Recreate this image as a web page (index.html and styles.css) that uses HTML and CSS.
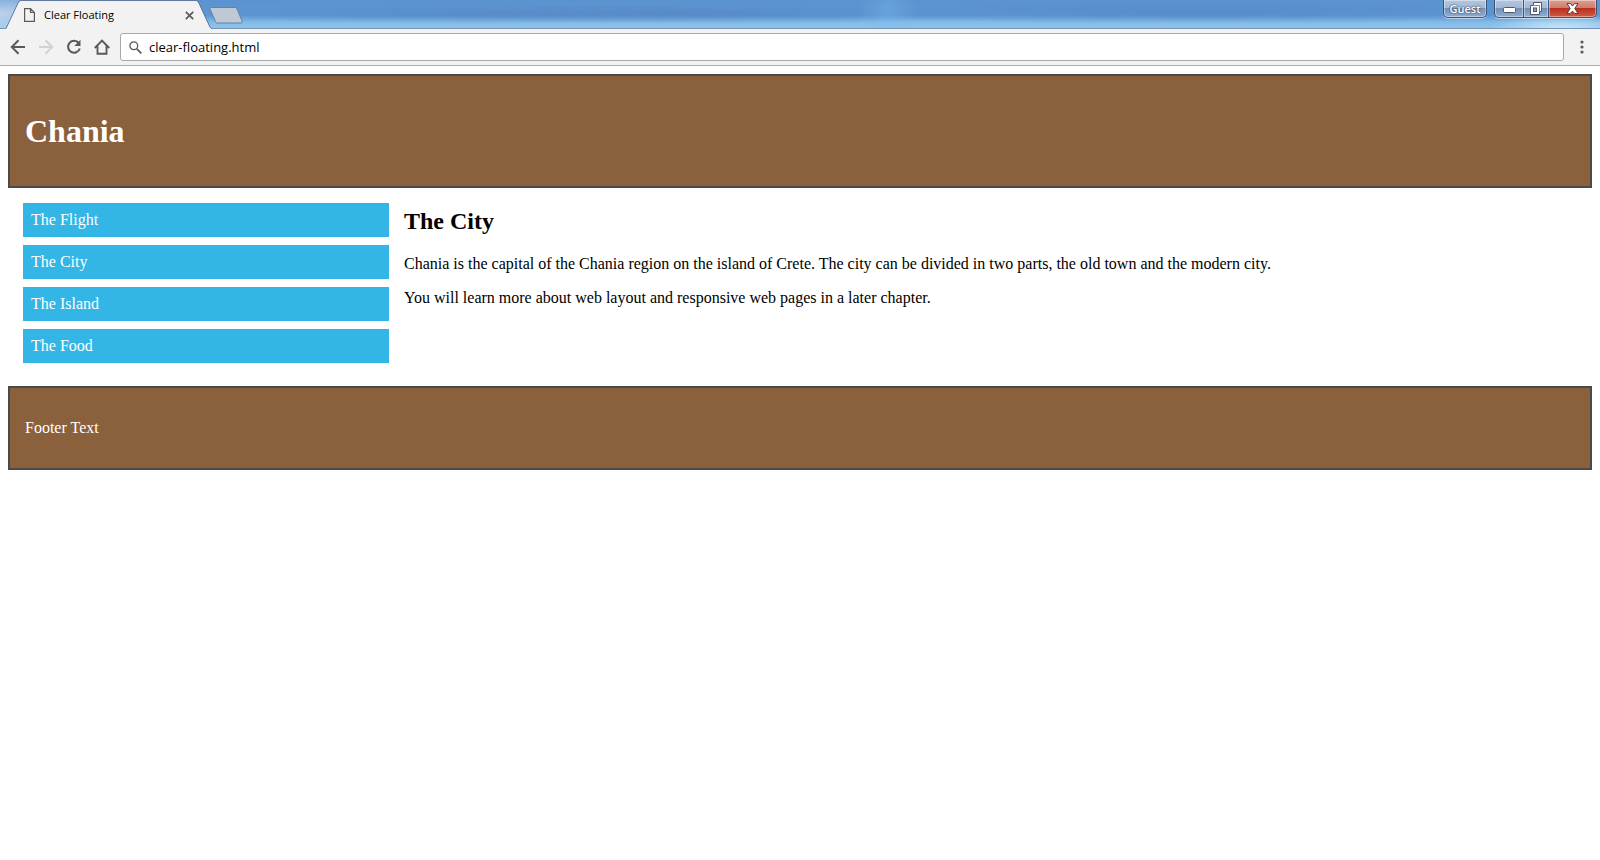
FILE: index.html
```html
<!DOCTYPE html>
<html lang="en">
<head>
<meta charset="utf-8">
<title>Clear Floating</title>
<link rel="stylesheet" href="styles.css">
</head>
<body>
<div class="browser">
  <div class="titlebar">
    <div class="tab">
      <svg class="tab-shape" width="206" height="29" viewBox="0 0 206 29" aria-hidden="true">
        <path d="M0 28.5 L12 3 Q13 .5 15 .5 H190 Q191.500 .5 192.500 3 L203.500 27 L205 28.500 V29 H0Z" fill="#f2f2f2"/>
        <path d="M0 28.500 L12 3 Q13 .5 15 .5 H190 Q192 .5 193 3 L204 27 L205.500 28.500" fill="none" stroke="#60799d"/>
      </svg>
      <div class="tab-content">
        <svg width="11" height="14" viewBox="0 0 11 14" fill="none" stroke="#5a5a5a" aria-hidden="true"><path d="M.6 .6H6.500L10.400 4.500V13.400H.6ZM6.500 .6V4.500H10.400" stroke-width="1.2"/></svg>
        <span class="tab-title">Clear Floating</span>
        <button class="plain tab-close" aria-label="Close tab"><svg width="9" height="9" viewBox="0 0 9 9" stroke="#5a5a5a" stroke-width="1.7"><path d="M.8 .8L8.200 8.200M8.200 .8L.8 8.200"/></svg></button>
      </div>
    </div>
    <button class="plain new-tab" aria-label="New tab"><svg width="34" height="17" viewBox="0 0 34 17"><path d="M2 .5H26Q27.500 .5 28 2L33 14Q33.500 16 32 16H8.500Q7 16 6.500 14.500L1 2Q.5 .5 2 .5Z" fill="#bfc9d6" stroke="#5f83b0"/></svg></button>
    <div class="window-controls">
      <button class="glass guest">Guest</button>
      <div class="control-group">
        <button class="glass minimize" aria-label="Minimize"><svg width="13" height="6" viewBox="0 0 13 6"><rect x=".5" y=".5" width="12" height="5" rx="1" fill="#fff" stroke="#4f5a70"/></svg></button>
        <button class="glass restore" aria-label="Restore"><svg width="12" height="13" viewBox="0 0 12 13"><path d="M3.500 .5H11.500V9.500H9.500V12.500H.5V3.500H3.500Z" fill="#fff" stroke="#4f5a70"/><path d="M3.500 3.500H9.500V9.500" fill="none" stroke="#7b869a"/><rect x="3.500" y="6" width="3" height="3.500" fill="#8da2bd" stroke="#4f5a70"/></svg></button>
        <button class="glass close" aria-label="Close"><svg width="13" height="11" viewBox="0 0 13 11"><path d="M1 .6H4.500L6.500 3L8.500 .6H12L8.800 5.500L12 10.400H8.500L6.500 8L4.500 10.400H1L4.200 5.500Z" fill="#fff" stroke="#5b3a44"/></svg></button>
      </div>
    </div>
  </div>
  <div class="toolbar">
    <div class="nav-buttons">
      <button class="plain" aria-label="Back"><svg width="16" height="16" viewBox="0 0 16 16" fill="none" stroke="#5a5a5a" stroke-width="2"><path d="M15 8H2.500M8.500 1.300L1.800 8L8.500 14.700"/></svg></button>
      <button class="plain" aria-label="Forward" disabled><svg width="16" height="16" viewBox="0 0 16 16" fill="none" stroke="#d2d2d2" stroke-width="2"><path d="M1 8H13.500M7.500 1.300L14.200 8L7.500 14.700"/></svg></button>
      <button class="plain" aria-label="Reload"><svg width="16" height="16" viewBox="0 0 16 16"><path d="M12.800 4A6 6 0 1 0 13.800 9.500" fill="none" stroke="#5a5a5a" stroke-width="2.1"/><path d="M14.500 .8V7H8.300Z" fill="#5a5a5a"/></svg></button>
      <button class="plain" aria-label="Home"><svg width="16" height="16" viewBox="0 0 16 16" fill="none" stroke="#5a5a5a" stroke-width="1.900"><path d="M.8 9L8 1.500L15.200 9M3.500 7V14.800H12.500V7"/></svg></button>
    </div>
    <label class="address">
      <svg width="13" height="13" viewBox="0 0 13 13" fill="none" stroke="#5a5a5a" aria-hidden="true"><circle cx="4.800" cy="4.800" r="3.900" stroke-width="1.300"/><path d="M7.800 7.800L12.300 12.300" stroke-width="1.700"/></svg>
      <input type="text" value="clear-floating.html" aria-label="Address">
    </label>
    <button class="plain menu-button" aria-label="Menu"><svg width="4" height="14" viewBox="0 0 4 14" fill="#5a5a5a"><circle cx="2" cy="2" r="1.600"/><circle cx="2" cy="7" r="1.600"/><circle cx="2" cy="12" r="1.600"/></svg></button>
  </div>
</div>
<div class="page">
  <header class="banner"><h1>Chania</h1></header>
  <div class="columns">
    <nav class="menu">
      <ul>
        <li><a href="#flight">The Flight</a></li>
        <li><a href="#city">The City</a></li>
        <li><a href="#island">The Island</a></li>
        <li><a href="#food">The Food</a></li>
      </ul>
    </nav>
    <main class="content" id="city">
      <h2>The City</h2>
      <p>Chania is the capital of the Chania region on the island of Crete. The city can be divided in two parts, the old town and the modern city.</p>
      <p>You will learn more about web layout and responsive web pages in a later chapter.</p>
    </main>
  </div>
  <footer class="banner"><p>Footer Text</p></footer>
</div>
</body>
</html>
```
FILE: styles.css
```css
* { box-sizing: border-box; }

body {
  margin: 0;
  background: #fff;
  color: #000;
  font: 16px/18px "Liberation Serif", "Times New Roman", serif;
}

svg { display: block; }

.browser { font-family: "Open Sans", "Noto Sans", sans-serif; }

.plain {
  display: flex;
  padding: 0;
  border: 0;
  background: none;
}

/* Title bar */
.titlebar {
  display: flex;
  height: 29px;
  padding-left: 6px;
  border-bottom: 1px solid #7494b8;
  background:
    radial-gradient(ellipse 30px 30px at 888px 14px, rgba(120, 190, 240, .4), transparent),
    radial-gradient(ellipse 110px 26px at 0 14px, rgba(200, 218, 240, .9), transparent),
    radial-gradient(ellipse 70px 14px at calc(100% - 40px) 28px, rgba(205, 232, 248, .9), transparent),
    radial-gradient(ellipse 300px 10px at 480px 14px, rgba(80, 130, 190, .5), transparent),
    radial-gradient(ellipse 280px 10px at 720px 14px, rgba(80, 130, 190, .5), transparent),
    radial-gradient(ellipse 360px 12px at 1200px 12px, rgba(80, 130, 190, .5), transparent),
    linear-gradient(#5b93d0, #5f97d2 55%, #83bbe8 80%, #92c1e6);
}

.tab {
  position: relative;
  width: 206px;
  height: 29px;
}

.tab-shape {
  position: absolute;
  inset: 0;
}

.tab-content {
  position: relative;
  display: flex;
  align-items: center;
  height: 30px;
  padding: 0 18px;
}

.tab-title {
  flex: 1;
  padding-left: 9px;
  font-size: 11px;
  line-height: 16px;
}

.new-tab { padding-top: 7px; margin-left: -3px; }

.window-controls {
  display: flex;
  gap: 7px;
  margin-left: auto;
  padding-right: 3px;
}

.glass {
  display: flex;
  align-items: center;
  justify-content: center;
  height: 18px;
  padding: 0;
  border: 1px solid #3d5478;
  border-top: 0;
  background: linear-gradient(#b4c6df, #a3b9d6 45%, #7390b5 50%, #90aed2);
  box-shadow: inset 0 0 0 1px rgba(255, 255, 255, .4), 0 1px 0 rgba(255, 255, 255, .5);
}

.guest {
  width: 44px;
  border-radius: 0 0 5px 5px;
  color: #fff;
  font: 600 11px/16px "Open Sans", "Noto Sans", sans-serif;
  text-shadow: 0 0 2px #33425c, 0 0 1px #33425c;
}

.control-group { display: flex; }

.minimize { width: 29px; border-right: 0; border-radius: 0 0 0 5px; }
.minimize svg { margin-top: 3px; }
.restore { width: 26px; }
.close {
  width: 48px;
  border-left: 0;
  border-radius: 0 0 5px 0;
  background: linear-gradient(#dda094, #d07c6b 45%, #b83120 50%, #d35a42);
}

/* Toolbar */
.toolbar {
  display: flex;
  align-items: center;
  height: 37px;
  border-bottom: 1px solid #b0b0b0;
  background: #f2f2f2;
}

.nav-buttons {
  display: flex;
  gap: 12px;
  padding: 0 10px;
}

.address {
  display: flex;
  flex: 1;
  align-items: center;
  gap: 7px;
  height: 28px;
  padding: 0 8px;
  border: 1px solid #a9a9a9;
  border-radius: 3px;
  background: #fff;
}

.address input {
  flex: 1;
  min-width: 0;
  padding: 0;
  border: 0;
  outline: 0;
  background: none;
  color: #000;
  font: 13px/20px "Open Sans", "Noto Sans", sans-serif;
}

.menu-button { padding: 0 16px; }

/* Page */
.page { padding: 8px; }

.banner {
  padding: 15px;
  border: 2px solid #4a4a4a;
  background: #8b603d;
  color: #fff;
}

h1 {
  margin: 22px 0 21px;
  font-size: 32px;
  line-height: 37px;
}

h2 {
  margin: 20px 0;
  font-size: 24px;
  line-height: 27px;
}

p { margin: 16px 0; }

.columns { display: flex; }

.menu {
  width: 25%;
  padding: 15px;
}

.menu ul {
  margin: 0;
  padding: 0;
  list-style: none;
}

.menu li {
  margin-bottom: 8px;
  padding: 8px;
  background: #33b5e5;
}

.menu a { color: #fff; text-decoration: none; }

.content { flex: 1; }
```
